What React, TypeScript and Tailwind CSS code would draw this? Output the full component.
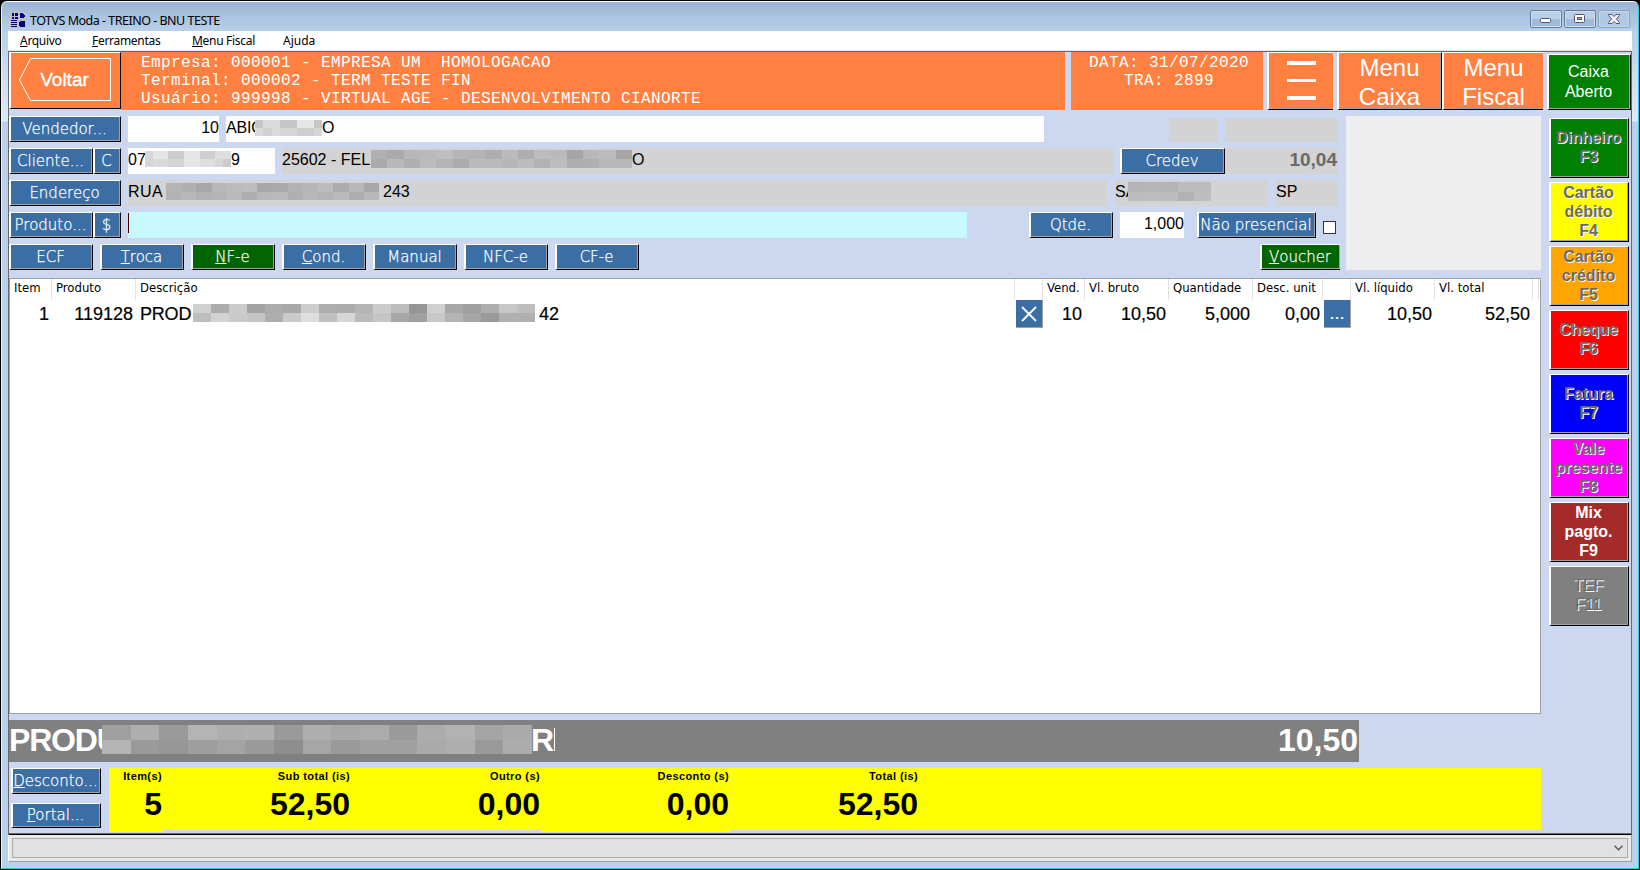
import type { ReactNode } from 'react'
import clsx from 'clsx'

const UI = "font-['DejaVu_Sans',sans-serif]"
const ARIAL = "font-['Liberation_Sans',sans-serif]"

const BEVEL =
  'border-l-2 border-t border-r border-b border-l-white border-t-white border-r-black border-b-black shadow-[inset_-1px_-1px_0_#a0a0a0]'

interface BtnProps {
  className?: string
  children: ReactNode
}

function Btn({ className, children }: BtnProps) {
  return (
    <button
      className={clsx(
        'flex shrink-0 items-center justify-center pr-[2px] whitespace-nowrap text-[15px] leading-none font-extralight text-white [-webkit-text-stroke:0.250px_#fff]',
        BEVEL,
        UI,
        className,
      )}
    >
      {children}
    </button>
  )
}

// Censored text: two rows of gray cells
interface MosaicProps {
  top: number[]
  bottom: number[]
  className: string
}

function Mosaic({ top, bottom, className }: MosaicProps) {
  return (
    <div className={clsx('relative flex shrink-0 flex-col', className)}>
      {[top, bottom].map((row, r) => (
        <div key={r} className="flex flex-1">
          {row.map((v, i) => (
            <div key={i} className="flex-1" style={{ backgroundColor: `rgb(${v},${v},${v})` }} />
          ))}
        </div>
      ))}
    </div>
  )
}

const payments = [
  { lines: ['Dinheiro', 'F3'], style: 'bg-[#008000] text-[#696969] [text-shadow:1px_1px_0_#fff] font-bold' },
  { lines: ['Cartão', 'débito', 'F4'], style: 'bg-[#ffff00] text-[#696969] [text-shadow:1px_1px_0_#fff] font-bold' },
  { lines: ['Cartão', 'crédito', 'F5'], style: 'bg-[#ffa500] text-[#696969] [text-shadow:1px_1px_0_#fff] font-bold' },
  { lines: ['Cheque', 'F6'], style: 'bg-[#ff0000] text-[#696969] [text-shadow:1px_1px_0_#fff] font-bold' },
  { lines: ['Fatura', 'F7'], style: 'bg-[#0000ff] text-[#696969] [text-shadow:1px_1px_0_#fff] font-bold' },
  { lines: ['Vale', 'presente', 'F8'], style: 'bg-[#ff00ff] text-[#696969] [text-shadow:1px_1px_0_#fff] font-bold' },
  { lines: ['Mix', 'pagto.', 'F9'], style: 'bg-[#a52a2a] text-white font-bold' },
  { lines: ['TEF', 'F11'], style: 'bg-[#808080] text-[#696969] [text-shadow:1px_1px_0_#fff]' },
]

const columns = [
  { label: 'Item', value: '1', width: 'w-[42px]' },
  { label: 'Produto', value: '119128', width: 'w-[84px]' },
  { label: 'Descrição', value: '', width: 'w-[879px]' },
  { label: '', value: 'x', width: 'w-[28px]' },
  { label: 'Vend.', value: '10', width: 'w-[42px]' },
  { label: 'Vl. bruto', value: '10,50', width: 'w-[84px]' },
  { label: 'Quantidade', value: '5,000', width: 'w-[84px]' },
  { label: 'Desc. unit', value: '0,00', width: 'w-[70px]' },
  { label: '', value: '...', width: 'w-[28px]' },
  { label: 'Vl. líquido', value: '10,50', width: 'w-[84px]' },
  { label: 'Vl. total', value: '52,50', width: 'w-[98px]' },
]

const totals = [
  { label: 'Item(s)', value: '5', width: 'w-[54px] h-16' },
  { label: 'Sub total (is)', value: '52,50', width: 'w-[188px] h-[62px]' },
  { label: 'Outro (s)', value: '0,00', width: 'w-[190px] h-[62px]' },
  { label: 'Desconto (s)', value: '0,00', width: 'w-[189px] h-16' },
  { label: 'Total (is)', value: '52,50', width: 'w-[189px] h-[62px]' },
]

function AppIcon() {
  return (
    <svg width="16" height="16" viewBox="0 0 16 16" shapeRendering="crispEdges" className="bg-[#c0c0c0]">
      <g fill="#000080">
        <path d="M2 1h2v3H2zM5 1h3v3H5zM2 5h2v2H2zM5 5h3v2H5zM1 8h6v1H1zM1 10h6v1H1zM1 12h6v1H1zM1 14h6v1H1z" />
        <path d="M10 1h2l3 2v2l-3 1h-2z" />
        <path d="M10 9h4l1 1v4l-1 1h-4l-1-1v-4z" />
      </g>
    </svg>
  )
}

function WindowButtons() {
  const base = 'flex h-[18px] items-center justify-center rounded-[2px] border'
  return (
    <div className="flex gap-[2px]">
      <div className={clsx(base, 'w-8 border-[#667c96] bg-linear-to-b from-[#b9d0e8] from-50% to-[#9ebbd9] to-50% shadow-[inset_0_0_0_1px_#cfdff0]')}>
        <svg width="12" height="6" viewBox="0 0 12 6" className="mt-[3px]">
          <rect x="0.5" y="0.5" width="10" height="4" rx="1" fill="#fff" stroke="#55566b" />
        </svg>
      </div>
      <div className={clsx(base, 'w-8 border-[#667c96] bg-linear-to-b from-[#b9d0e8] from-50% to-[#9ebbd9] to-50% shadow-[inset_0_0_0_1px_#cfdff0]')}>
        <svg width="12" height="10" viewBox="0 0 12 10">
          <rect x="0.5" y="0.5" width="10" height="8" rx="1" fill="#fff" stroke="#55566b" />
          <rect x="3.5" y="3.5" width="4" height="2" fill="#9ebbd9" stroke="#55566b" />
        </svg>
      </div>
      <div className={clsx(base, 'w-8 border-[#86a3c4] bg-[#b0c9e4] shadow-[inset_0_0_0_1px_#c4d8ec]')}>
        <svg width="12" height="10" viewBox="0 0 12 10">
          <path
            d="M.5.5h3.500L6 2.500 8 .5h3.500v1L8.500 5l3 3.500v1H8L6 7.500 4 9.500H.5v-1L3.500 5l-3-3.500z"
            fill="#eee"
            stroke="#55566b"
          />
        </svg>
      </div>
    </div>
  )
}

function Cell({ value }: { value: string }) {
  if (value === 'x') {
    return (
      <div className="ml-px flex h-[28px] items-center justify-center border-r border-b border-[#a0a0a0] bg-[#3a6ea5]">
        <svg width="16" height="16" viewBox="0 0 16 16" stroke="#fff" strokeWidth="1.8">
          <path d="M1 1l14 14M15 1L1 15" />
        </svg>
      </div>
    )
  }
  if (value === '...') {
    return (
      <div className="ml-px flex h-[28px] items-center justify-center border-r border-b border-[#a0a0a0] bg-[#3a6ea5] text-white">
        ...
      </div>
    )
  }
  if (!value) {
    return (
      <div className="flex h-[28px] items-center pl-1">
        <span className="w-[53px] tracking-[-0.200px]">PROD</span>
        <Mosaic
          className="-mt-[2px] h-[18px] w-[342px]"
          top={[208, 172, 203, 163, 172, 168, 205, 174, 172, 180, 204, 190, 150, 208, 167, 160, 174, 199, 190]}
          bottom={[190, 210, 202, 196, 174, 202, 222, 192, 214, 186, 198, 168, 160, 200, 180, 166, 154, 176, 176]}
        />
        <span className="pl-1">42</span>
      </div>
    )
  }
  return <div className="flex h-[28px] items-center justify-end pr-[3px]">{value}</div>
}

export default function App() {
  return (
    <div className="flex h-[870px] w-[1640px] bg-black">
      <div className="mx-px mt-px mb-px flex flex-1 flex-col overflow-hidden rounded-t-md border-t border-r border-b border-l border-t-white border-r-[#26cbe8] border-b-[#26cbe8] border-l-white/70 bg-[#b9d1ea] bg-[linear-gradient(#9bb5d3,#b9d1ea_30px,#dfeaf6_119px,#b9d1ea_120px)] px-[6px]">
        {/* Title bar */}
        <div className="flex h-[29px] shrink-0 items-start justify-between pt-2">
          <div className="flex items-center gap-1 pt-px pl-[2px]">
            <AppIcon />
            <span className="pt-[2px] font-['Noto_Sans',sans-serif] text-[12.5px] leading-4 tracking-[-0.500px] text-black">
              TOTVS Moda - TREINO - BNU TESTE
            </span>
          </div>
          <div className="pr-[2px]">
            <WindowButtons />
          </div>
        </div>

        {/* Menu */}
        <div className="flex h-5 shrink-0 items-center border-b border-[#e5e5e5] bg-white pt-px pl-3 font-['Noto_Sans',sans-serif] text-[12px] leading-none tracking-[-0.300px] text-black">
          <span className="w-[72px]"><u>A</u>rquivo</span>
          <span className="w-[100px]"><u>F</u>erramentas</span>
          <span className="w-[91px]"><u>M</u>enu Fiscal</span>
          <span className="tracking-[0px]">A<u>j</u>uda</span>
        </div>

        {/* Client area */}
        <div className="flex h-[783px] shrink-0 flex-col border-t border-r border-b border-l border-[#696969] bg-[#ccd7f0]">
          {/* Header */}
          <div className={clsx('flex h-[58px] shrink-0 text-white', ARIAL)}>
            <button className={clsx('flex h-[57px] w-28 items-center justify-center bg-[#ff8040] pr-[2px] pb-px', BEVEL)}>
              <span className="relative flex h-[44px] w-[92px] items-center justify-center">
                <svg width="92" height="44" viewBox="0 0 92 44" fill="none" stroke="#fff" className="absolute inset-0">
                  <path d="M11.500.5h80v42h-80L.5 22z" />
                </svg>
                <span className="text-[19px] [-webkit-text-stroke:0.400px_#fff]">Voltar</span>
              </span>
            </button>
            <div className="w-[944px] bg-[#ff8040] pt-[2px] pl-5 font-['Liberation_Mono',monospace] text-[16px] leading-[18px] tracking-[0.400px] whitespace-pre">
              <div>Empresa: 000001 - EMPRESA UM  HOMOLOGACAO</div>
              <div>Terminal: 000002 - TERM TESTE FIN</div>
              <div>Usuário: 999998 - VIRTUAL AGE - DESENVOLVIMENTO CIANORTE</div>
            </div>
            <div className="ml-[6px] w-48 bg-[#ff8040] pt-[2px] pl-1 text-center font-['Liberation_Mono',monospace] text-[16px] leading-[18px] tracking-[0.400px]">
              <div>DATA: 31/07/2020</div>
              <div>TRA: 2899</div>
            </div>
            <div className="ml-1 flex w-[66px] flex-col items-center gap-[14px] border-t border-b border-l-2 border-t-white border-b-black border-l-white bg-[#ff8040] pt-2 shadow-[inset_0_-1px_0_#a0a0a0]">
              <i className="h-[3.500px] w-[29px] bg-white" />
              <i className="h-[3.500px] w-[29px] bg-white" />
              <i className="h-[3.500px] w-[29px] bg-white" />
            </div>
            <button className={clsx('ml-1 w-[105px] bg-[#ff8040] pr-px pb-[2px] text-[24px] leading-[29px]', BEVEL)}>
              Menu<br />Caixa
            </button>
            <button className="w-[101px] border-t border-b border-l-2 border-t-white border-b-black border-l-white bg-[#ff8040] pb-[2px] text-[24px] leading-[29px] shadow-[inset_0_-1px_0_#a0a0a0]">
              Menu<br />Fiscal
            </button>
            <button className={clsx('mt-[2px] ml-1 w-[84px] bg-[#008000] pr-[2px] text-[16px] leading-5', BEVEL)}>
              Caixa<br />Aberto
            </button>
          </div>

          <div className="flex h-[723px]">
            <div className="flex w-[1532px] flex-col">
              <div className="flex h-[162px] pt-[6px]">
                {/* Form */}
                <div className={clsx('flex w-[1337px] flex-col gap-[6px] text-[16px] leading-6 text-black', ARIAL)}>
                  <div className="flex h-[26px]">
                    <Btn className="w-28 bg-[#3a6ea5]">Vendedor...</Btn>
                    <div className="ml-[7px] w-[91px] bg-white text-right">10</div>
                    <div className="ml-[7px] flex w-[818px] bg-white">
                      <span className="w-[29px] tracking-[-0.200px]">ABIG</span>
                      <Mosaic
                        className="mt-1 h-4 w-[67px]"
                        top={[200, 218, 218, 198, 198, 230, 230, 198]}
                        bottom={[218, 208, 218, 214, 214, 206, 206, 214]}
                      />
                      <span>O</span>
                    </div>
                    <div className="mt-[2px] ml-[125px] w-[49px] bg-[#d3d3d3]" />
                    <div className="mt-[2px] ml-[7px] w-[113px] bg-[#d3d3d3]" />
                  </div>
                  <div className="flex h-[26px]">
                    <Btn className="w-[84px] bg-[#3a6ea5]">Cliente...</Btn>
                    <Btn className="w-7 bg-[#3a6ea5]">C</Btn>
                    <div className="ml-[7px] flex w-[147px] bg-white">
                      <span className="w-[17px]">07</span>
                      <Mosaic
                        className="mt-[3px] h-4 w-[86px]"
                        top={[214, 228, 228, 204, 204, 230, 230, 206, 206, 222, 222]}
                        bottom={[214, 218, 218, 212, 212, 230, 230, 222, 222, 216, 204]}
                      />
                      <span>9</span>
                    </div>
                    <div className="ml-[7px] flex w-[832px] bg-[#d3d3d3]">
                      <span className="w-[89px] whitespace-nowrap">25602 - FEL</span>
                      <Mosaic
                        className="mt-[2px] h-[18px] w-[261px]"
                        top={[176, 170, 184, 186, 190, 182, 180, 174, 186, 174, 188, 186, 166, 184, 188, 166]}
                        bottom={[170, 184, 176, 188, 180, 172, 186, 186, 182, 188, 178, 190, 174, 176, 184, 184]}
                      />
                      <span>O</span>
                    </div>
                    <Btn className="ml-[6px] w-[105px] bg-[#3a6ea5]">Credev</Btn>
                    <div className="w-[113px] bg-[#d3d3d3] pr-px text-right text-[19px] font-bold text-[#696969]">10,04</div>
                  </div>
                  <div className="flex h-[26px]">
                    <Btn className="w-28 bg-[#3a6ea5]">Endereço</Btn>
                    <div className="ml-[7px] flex w-[979px] bg-[#d3d3d3]">
                      <span className="w-[38px] tracking-[0.500px]">RUA</span>
                      <Mosaic
                        className="mt-[3px] h-[17px] w-[213px]"
                        top={[180, 176, 168, 184, 188, 190, 168, 170, 178, 182, 188, 172, 184, 168]}
                        bottom={[178, 184, 178, 180, 186, 174, 184, 186, 176, 184, 180, 186, 174, 184]}
                      />
                      <span className="pl-1">243</span>
                    </div>
                    <div className="ml-2 flex w-[153px] bg-[#d3d3d3]">
                      <span className="w-[13px]">SA</span>
                      <Mosaic
                        className="mt-[2px] h-[19px] w-[83px]"
                        top={[180, 182, 180, 188, 188]}
                        bottom={[188, 190, 188, 178, 190]}
                      />
                    </div>
                    <div className="ml-2 w-[62px] bg-[#d3d3d3]">SP</div>
                  </div>
                  <div className="flex h-[26px]">
                    <Btn className="w-[84px] bg-[#3a6ea5]">Produto...</Btn>
                    <Btn className="w-7 bg-[#3a6ea5]">$</Btn>
                    <div className="ml-[7px] w-[839px] bg-[#c8f9ff] pt-px">
                      <div className="h-5 w-px bg-[#400000]" />
                    </div>
                    <Btn className="ml-[62px] w-[84px] bg-[#3a6ea5]">Qtde.</Btn>
                    <div className="ml-[7px] w-16 bg-white text-right">1,000</div>
                    <Btn className="ml-[13px] w-[119px] bg-[#3a6ea5]">Não presencial</Btn>
                    <div className="mt-[9px] ml-[7px] h-[13px] w-[13px] border border-[#333] bg-white" />
                  </div>
                  <div className="flex h-[26px] gap-[7px]">
                    <Btn className="w-[84px] bg-[#3a6ea5]">ECF</Btn>
                    <Btn className="w-[84px] bg-[#3a6ea5]"><u>T</u>roca</Btn>
                    <Btn className="w-[84px] bg-[#006400]"><u>N</u>F-e</Btn>
                    <Btn className="w-[84px] bg-[#3a6ea5]"><u>C</u>ond.</Btn>
                    <Btn className="w-[84px] bg-[#3a6ea5]">Manual</Btn>
                    <Btn className="w-[84px] bg-[#3a6ea5]">NFC-e</Btn>
                    <Btn className="w-[84px] bg-[#3a6ea5]">CF-e</Btn>
                    <Btn className="mr-[6px] ml-auto w-20 border-r-0 bg-[#006400]"><u>V</u>oucher</Btn>
                  </div>
                </div>
                <div className="h-[154px] w-[195px] bg-[#eeeeee]" />
              </div>

              {/* Items */}
              <div className="mt-[6px] flex h-[436px] flex-col border border-[#a0a0a0] bg-white text-black">
                <div className="flex h-[21px] font-['DejaVu_Sans_Condensed','DejaVu_Sans',sans-serif] text-[13px] leading-[17px]">
                  {columns.map((c, i) => (
                    <div key={i} className={clsx('shrink-0 border-r border-[#e2e2e2] pl-1 whitespace-nowrap', c.width)}>
                      {c.label}
                    </div>
                  ))}
                  <div className="w-[6px] border-r border-[#e2e2e2]" />
                </div>
                <div className={clsx('flex h-[28px] text-[18px] [-webkit-text-stroke:0.200px]', ARIAL)}>
                  {columns.map((c, i) => (
                    <div key={i} className={clsx('shrink-0', c.width)}>
                      <Cell value={c.value} />
                    </div>
                  ))}
                </div>
              </div>

              {/* Current product */}
              <div className={clsx('mt-[6px] flex h-[42px] w-[1350px] text-[32px] leading-[40px] font-bold text-white', ARIAL)}>
                <div className="flex flex-1 bg-[#808080]">
                  <span className="w-[93px] tracking-[-1.200px]">PRODU</span>
                  <Mosaic
                    className="mt-[5px] h-[29px] w-[430px]"
                    top={[160, 174, 154, 180, 174, 176, 154, 174, 168, 172, 154, 172, 178, 164, 170]}
                    bottom={[180, 154, 150, 158, 164, 154, 142, 166, 154, 160, 160, 170, 174, 154, 172]}
                  />
                  <span className="-ml-px w-[23px]">R</span>
                  <i className="mt-2 h-[23px] w-px bg-white" />
                </div>
                <div className="bg-[#808080] pr-px">10,50</div>
              </div>

              {/* Totals */}
              <div className={clsx('mt-[6px] flex h-16 text-black', ARIAL)}>
                <div className="flex w-[100px] flex-col gap-[9px] pl-[2px]">
                  <Btn className="h-[26px] w-[90px] bg-[#3a6ea5]"><span><u>D</u>esconto...</span></Btn>
                  <Btn className="h-[25px] w-[90px] bg-[#3a6ea5]"><span><u>P</u>ortal...</span></Btn>
                </div>
                {totals.map((t) => (
                  <div key={t.label} className={clsx('bg-[#ffff00] pr-px text-right font-bold whitespace-nowrap', t.width)}>
                    <div className="pt-px text-[11px] leading-[14px] tracking-[0.400px]">{t.label}</div>
                    <div className="pt-px text-[32px] leading-[40px]">{t.value}</div>
                  </div>
                ))}
                <div className="h-[62px] flex-1 bg-[#ffff00]" />
              </div>
            </div>

            {/* Payment methods */}
            <div className="flex flex-col gap-1 pt-2 pl-2">
              {payments.map((p) => (
                <button
                  key={p.lines[0]}
                  className={clsx('flex h-[60px] w-20 flex-col items-center justify-center pr-[2px] pb-[2px] text-[16px] leading-[19px]', BEVEL, ARIAL, p.style)}
                >
                  {p.lines.map((l) => (
                    <span key={l}>{l}</span>
                  ))}
                </button>
              ))}
            </div>
          </div>
        </div>

        {/* Status bar */}
        <div className="flex h-[28px] shrink-0 border-t border-r border-b border-l border-t-black border-r-[#a0a0a0] border-b-[#a0a0a0] border-l-white bg-[#e8e8e8] pt-[3px] pr-[3px] pb-[3px] pl-[3px]">
          <div className="flex flex-1 items-center justify-end border border-[#adadad] bg-[#e1e1e1] pr-1">
            <svg width="9" height="6" viewBox="0 0 9 6" fill="none" stroke="#555" strokeWidth="1.300">
              <path d="M.5.8l4 4 4-4" />
            </svg>
          </div>
        </div>
      </div>
    </div>
  )
}
